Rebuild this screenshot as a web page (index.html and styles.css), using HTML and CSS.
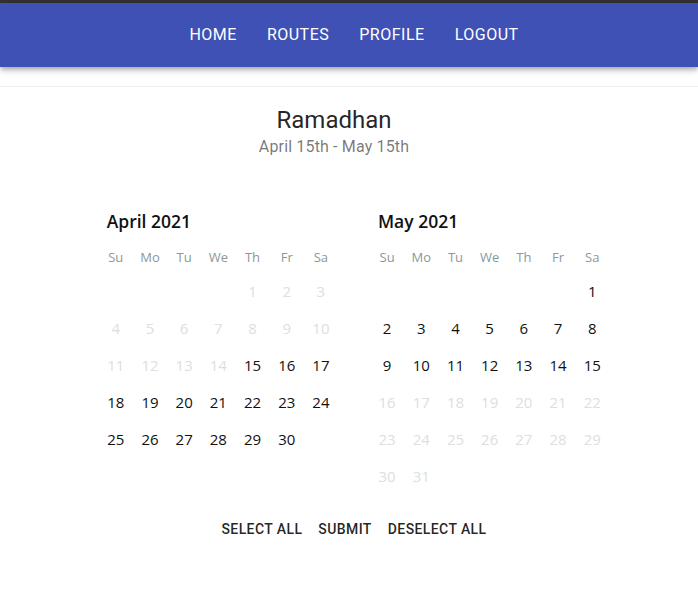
FILE: index.html
```html
<!DOCTYPE html>
<html>
<head>
<meta charset="utf-8">
<link rel="stylesheet" href="styles.css">
</head>
<body>
<div class="topbar"></div>
<header class="appbar">
  <nav class="nav">
    <a class="nav-link">HOME</a>
    <a class="nav-link">ROUTES</a>
    <a class="nav-link">PROFILE</a>
    <a class="nav-link">LOGOUT</a>
  </nav>
</header>
<main class="card">
  <div class="heading">
    <h1 class="title">Ramadhan</h1>
    <p class="subtitle">April 15th - May 15th</p>
  </div>
  <div class="months">
    <div class="month">
      <div class="caption">April 2021</div>
      <div class="grid">
        <div class="wd">Su</div><div class="wd">Mo</div><div class="wd">Tu</div><div class="wd">We</div><div class="wd">Th</div><div class="wd">Fr</div><div class="wd">Sa</div>
        <div class="day"></div><div class="day"></div><div class="day"></div><div class="day"></div>
        <div class="day off">1</div><div class="day off">2</div><div class="day off">3</div>
        <div class="day off">4</div><div class="day off">5</div><div class="day off">6</div><div class="day off">7</div><div class="day off">8</div><div class="day off">9</div><div class="day off">10</div>
        <div class="day off">11</div><div class="day off">12</div><div class="day off">13</div><div class="day off">14</div><div class="day">15</div><div class="day">16</div><div class="day">17</div>
        <div class="day">18</div><div class="day">19</div><div class="day">20</div><div class="day">21</div><div class="day">22</div><div class="day">23</div><div class="day">24</div>
        <div class="day">25</div><div class="day">26</div><div class="day">27</div><div class="day">28</div><div class="day">29</div><div class="day">30</div><div class="day"></div>
      </div>
    </div>
    <div class="month">
      <div class="caption">May 2021</div>
      <div class="grid">
        <div class="wd">Su</div><div class="wd">Mo</div><div class="wd">Tu</div><div class="wd">We</div><div class="wd">Th</div><div class="wd">Fr</div><div class="wd">Sa</div>
        <div class="day"></div><div class="day"></div><div class="day"></div><div class="day"></div><div class="day"></div><div class="day"></div><div class="day">1</div>
        <div class="day">2</div><div class="day">3</div><div class="day">4</div><div class="day">5</div><div class="day">6</div><div class="day">7</div><div class="day">8</div>
        <div class="day">9</div><div class="day">10</div><div class="day">11</div><div class="day">12</div><div class="day">13</div><div class="day">14</div><div class="day">15</div>
        <div class="day off">16</div><div class="day off">17</div><div class="day off">18</div><div class="day off">19</div><div class="day off">20</div><div class="day off">21</div><div class="day off">22</div>
        <div class="day off">23</div><div class="day off">24</div><div class="day off">25</div><div class="day off">26</div><div class="day off">27</div><div class="day off">28</div><div class="day off">29</div>
        <div class="day off">30</div><div class="day off">31</div>
      </div>
    </div>
  </div>
  <div class="actions">
    <button class="btn">SELECT ALL</button>
    <button class="btn">SUBMIT</button>
    <button class="btn">DESELECT ALL</button>
  </div>
</main>
</body>
</html>
```
FILE: styles.css
```css
html, body {
  margin: 0;
  padding: 0;
  background: #fff;
  font-family: Roboto, "Liberation Sans", sans-serif;
}
.topbar {
  height: 3px;
  background: #333;
}
.appbar {
  height: 64px;
  background: #3f51b5;
  box-shadow: 0 2px 4px -1px rgba(0,0,0,.2), 0 4px 5px 0 rgba(0,0,0,.14), 0 1px 10px 0 rgba(0,0,0,.12);
  position: relative;
  z-index: 1;
}
.nav {
  display: flex;
  justify-content: center;
  align-items: center;
  height: 64px;
  padding-left: 10px;
}
.nav-link {
  color: #fff;
  font-size: 16px;
  letter-spacing: 0.5px;
  padding: 0 15px;
  line-height: 64px;
}
.card {
  margin-top: 19px;
  border-top: 1px solid #f0f0f0;
  padding-top: 18px;
}
.heading {
  text-align: center;
  padding-right: 30px;
}
.title {
  margin: 0;
  font-size: 24px;
  font-weight: 400;
  line-height: 30px;
  color: rgba(0,0,0,.87);
}
.subtitle {
  margin: 0;
  font-size: 16px;
  letter-spacing: 0.15px;
  line-height: 24px;
  color: rgba(0,0,0,.54);
}
.months {
  display: flex;
  justify-content: center;
  gap: 32px;
  padding-left: 10px;
  margin-top: 50px;
  padding-bottom: 16px;
  font-family: "Open Sans", "Noto Sans", sans-serif;
}
.caption {
  padding-left: 8px;
  font-size: 17.5px;
  font-weight: 600;
  line-height: 24px;
  height: 24px;
  margin-bottom: 8px;
  color: #111;
}
.grid {
  display: grid;
  grid-template-columns: repeat(7, 34.2px);
}
.wd {
  height: 32px;
  line-height: 32px;
  text-align: center;
  font-size: 13px;
  color: #8b9898;
}
.day {
  height: 37px;
  line-height: 37px;
  text-align: center;
  font-size: 15px;
  color: #111;
}
.day.off {
  color: #dce0e0;
}
.actions {
  display: flex;
  justify-content: center;
  padding-left: 10px;
}
.btn {
  background: none;
  border: 0;
  font-family: Roboto, sans-serif;
  font-size: 14px;
  font-weight: 500;
  letter-spacing: 0.4px;
  padding: 6px 8px;
  line-height: 24.5px;
  color: rgba(0,0,0,.87);
}
```
